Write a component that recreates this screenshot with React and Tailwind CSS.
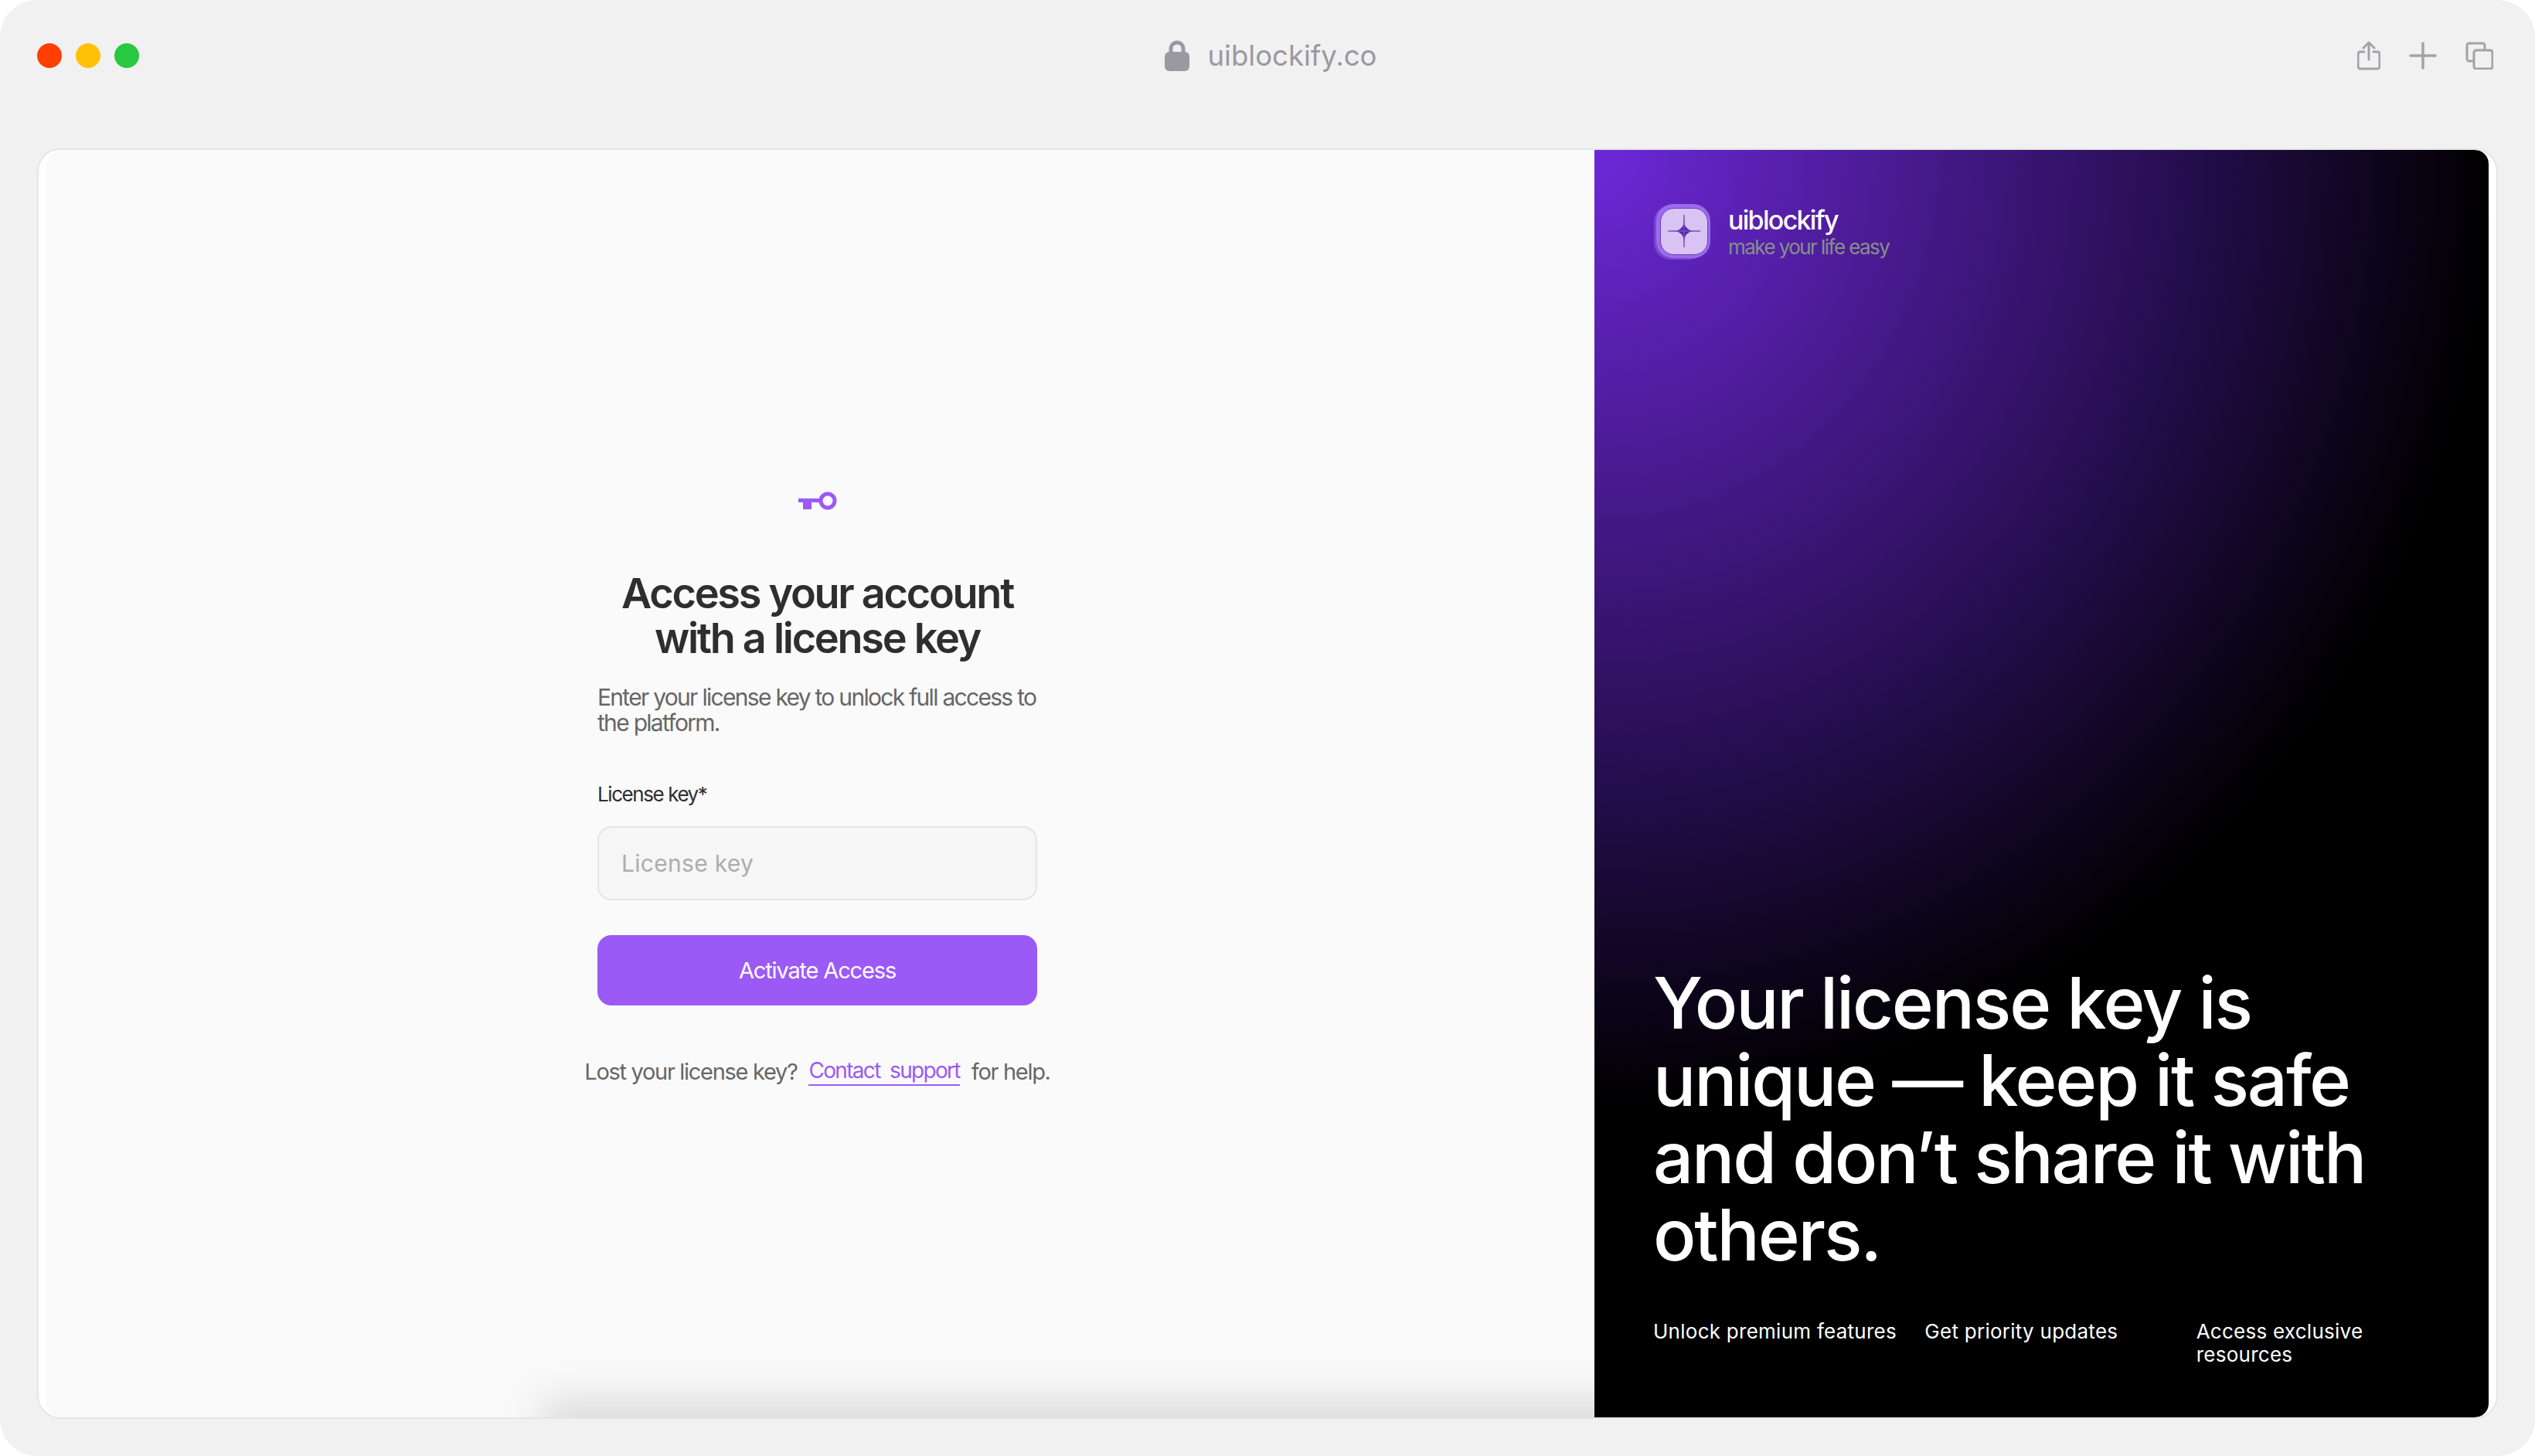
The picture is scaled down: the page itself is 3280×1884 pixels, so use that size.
const features = [
  ['Unlock premium features'],
  ['Get priority updates'],
  ['Access exclusive', 'resources'],
];

const LockIcon = () => (
  <svg width="34" height="40" viewBox="0 0 34 40" fill="none">
    <path d="M9 17V11a8 8 0 0 1 16 0v6" stroke="#9a99a1" strokeWidth="5" />
    <rect x="1" y="15" width="32" height="25" rx="6" fill="#9a99a1" />
  </svg>
);

const ShareIcon = () => (
  <svg width="30" height="38" viewBox="0 0 30 38" fill="none" stroke="#a3a2a9" strokeWidth="3" strokeLinecap="round" strokeLinejoin="round">
    <path d="M9 14H4a3 3 0 0 0-3 3v16a3 3 0 0 0 3 3h22a3 3 0 0 0 3-3V17a3 3 0 0 0-3-3h-5" />
    <path d="M15 24V2M8 9l7-7 7 7" />
  </svg>
);

const PlusIcon = () => (
  <svg width="36" height="36" viewBox="0 0 36 36" fill="none" stroke="#a3a2a9" strokeWidth="3.5" strokeLinecap="round">
    <path d="M18 2v32M2 18h32" />
  </svg>
);

const TabsIcon = () => (
  <svg width="36" height="36" viewBox="0 0 36 36" fill="none" stroke="#a3a2a9" strokeWidth="3">
    <path d="M10 25H5a3 3 0 0 1-3-3V5a3 3 0 0 1 3-3h17a3 3 0 0 1 3 3v5" strokeLinecap="round" />
    <rect x="11" y="11" width="24" height="24" rx="3" />
  </svg>
);

const KeyIcon = () => (
  <svg width="50" height="24" viewBox="0 0 50 24" fill="none">
    <circle cx="38" cy="12" r="9" stroke="#9b59f6" strokeWidth="5" />
    <path d="M0 9h28v5H17v9H6v-9H0z" fill="#9b59f6" />
  </svg>
);

const Logo = () => (
  <div className="relative w-[73px] h-[72px] shrink-0">
    <div className="absolute left-0 top-[1px] w-[68px] h-[71px] rounded-[22px] bg-[#8a5fd8]/60" />
    <div className="absolute left-[3px] top-0 w-[70px] h-[70px] rounded-[22px] bg-[#9a6cec]" />
    <div className="absolute left-[8px] top-[5px] w-[62px] h-[61px] rounded-[18px] bg-[#d8c3f2] border border-[#6d3fc0] flex items-center justify-center">
      <svg width="44" height="44" viewBox="0 0 44 44">
        <path d="M22 10 Q23.5 20.5 34 22 Q23.5 23.5 22 34 Q20.5 23.5 10 22 Q20.5 20.5 22 10 Z" fill="#5a2aa8" />
        <path d="M22 1v42M1 22h42" stroke="#7a4cc8" strokeWidth="1.5" />
      </svg>
    </div>
  </div>
);

export default function App() {
  return (
    <div className="bg-white" style={{ fontFamily: 'Inter, "Noto Sans", sans-serif' }}>
      <div className="h-[1884px] rounded-[48px] bg-[#f1f1f1] px-[48px]">
        <div className="grid grid-cols-3 items-center h-[144px] mb-[48px]">
          <div className="flex gap-[18px]">
            <span className="w-[32px] h-[32px] rounded-full bg-[#ff4000]" />
            <span className="w-[32px] h-[32px] rounded-full bg-[#ffc107]" />
            <span className="w-[32px] h-[32px] rounded-full bg-[#28c840]" />
          </div>
          <div className="flex items-center justify-center gap-[23px] pl-[7px] text-[36.5px] leading-none text-[#9a99a1]">
            <LockIcon />
            <span>uiblockify.co</span>
          </div>
          <div className="flex items-center justify-end gap-[37px] pr-[6px]">
            <ShareIcon />
            <PlusIcon />
            <TabsIcon />
          </div>
        </div>

        <div className="flex h-[1644px] rounded-[30px] border-2 border-[#e5e5e5] bg-white px-[10px] overflow-hidden">
          <div className="relative flex flex-1 items-center justify-center pr-[8px] rounded-l-[18px] bg-[#fafafa] overflow-hidden">
            <div className="absolute left-[640px] right-[-60px] bottom-[-46px] h-[70px] bg-black/12 blur-[26px]" />
            <div className="relative w-[569px] flex flex-col pt-[18px] pb-[3px]">
              <div className="flex justify-center mb-[79px]">
                <KeyIcon />
              </div>
              <h1 className="text-[54px] leading-[58px] font-semibold tracking-[-0.042em] text-[#2e2e2e] text-center">
                Access your account<br />with a license key
              </h1>
              <p className="mt-[31px] whitespace-nowrap text-[30px] leading-[33px] tracking-[-0.057em] text-[#666666]">
                Enter your license key to unlock full access to<br />the platform.
              </p>
              <label className="mt-[59px] text-[26px] leading-[34px] tracking-[-0.055em] text-[#2e2e2e]">License key*</label>
              <input
                placeholder="License key"
                className="mt-[24px] h-[96px] rounded-[18px] border-2 border-[#e5e5e5] bg-[#f6f6f6] px-[29px] text-[30px] tracking-[0.01em] placeholder:text-[#adadad] outline-none"
              />
              <button className="mt-[45px] h-[91px] rounded-[18px] bg-[#9b59f6] text-[29px] tracking-[-0.04em] text-white">
                Activate Access
              </button>
              <p className="mt-[66px] -mx-[20px] flex justify-center gap-[15px] whitespace-nowrap text-[29px] leading-[40px] tracking-[-0.045em] text-[#666666]">
                <span>Lost your license key?</span>
                <a className="text-[#9b59f6] border-b-2 border-[#9b59f6] leading-[36px] h-[38px] text-[28px] tracking-[-0.06em]">Contact&nbsp; support</a>
                <span>for help.</span>
              </p>
            </div>
          </div>

          <div className="w-[1157px] shrink-0 flex flex-col rounded-r-[18px] pl-[76px] pr-[43px] pb-[66px] pt-[69px] text-white bg-[radial-gradient(ellipse_1160px_1240px_at_0%_0%,#6d28d9_0%,#481a8e_35%,#260e50_65%,#000000_100%)]">
            <div className="flex items-center gap-[23px] pl-[1px]">
              <Logo />
              <div className="pt-[3px]">
                <div className="text-[34px] leading-[38px] font-medium tracking-[-0.05em]">uiblockify</div>
                <div className="text-[26px] leading-[32px] tracking-[-0.06em] text-[#85908c]">make your life easy</div>
              </div>
            </div>
            <h2 className="mt-auto text-[92px] leading-[100px] font-[450] tracking-[-0.024em]">
              Your license key is<br />unique — keep it safe<br />and don’t share it with<br />others.
            </h2>
            <div className="mt-[60px] grid grid-cols-3 gap-[16px] text-[26px] tracking-[0.01em] leading-[30px] text-white">
              {features.map((lines) => (
                <div key={lines[0]}>
                  {lines.map((line) => (
                    <div key={line}>{line}</div>
                  ))}
                </div>
              ))}
            </div>
          </div>
        </div>
      </div>
    </div>
  );
}
